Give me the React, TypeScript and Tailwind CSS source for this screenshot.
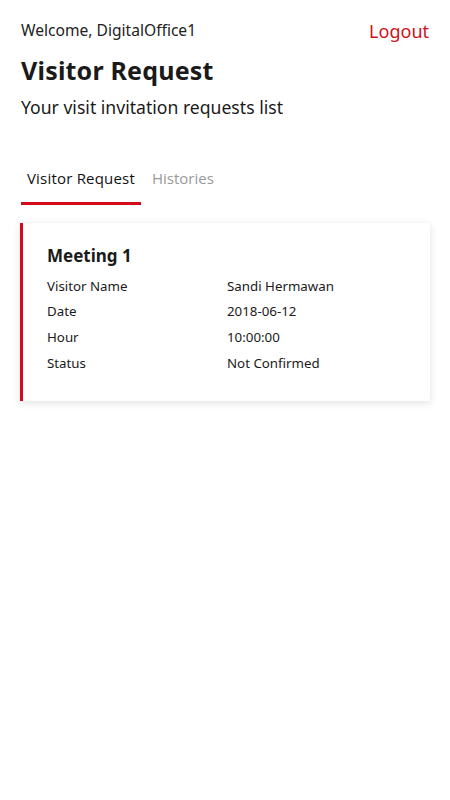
import React from 'react'

const rows = [
  { label: 'Visitor Name', value: 'Sandi Hermawan' },
  { label: 'Date', value: '2018-06-12' },
  { label: 'Hour', value: '10:00:00' },
  { label: 'Status', value: 'Not Confirmed' },
]

const App: React.FC = () => {
  return (
    <div className="min-h-[800px] bg-white px-[21px] pt-[19px] text-[#1a1a1a] font-['Noto_Sans',sans-serif]">
      <div className="flex items-center justify-between h-[24px]">
        <span className="text-[15.6px] text-[#222]">Welcome, DigitalOffice1</span>
        <button className="text-[18px] text-[#d0121b]">Logout</button>
      </div>
      <h1 className="mt-[10px] text-[25px] font-bold leading-[34px] tracking-[0.2px]">Visitor Request</h1>
      <p className="mt-[8px] text-[17.6px] leading-[24px]">Your visit invitation requests list</p>

      <div className="mt-[47px] flex font-['Open_Sans',sans-serif] text-[15px]">
        <div className="w-[120px] flex flex-col items-center">
          <span className="h-[24px] leading-[24px] text-[#111] tracking-[0.2px]">Visitor Request</span>
          <div className="mt-[12px] h-[3px] w-full bg-[#d20a1c]" />
        </div>
        <span className="ml-[11px] h-[24px] leading-[24px] text-[#999]">Histories</span>
      </div>

      <div className="mt-[18px] -ml-px w-[410px] border-l-[3px] border-[#d20a1c] bg-white shadow-[0_2px_8px_rgba(0,0,0,0.12)] pl-[24px] pt-[21px] pb-[25px]">
        <h2 className="text-[17px] font-bold leading-[24px]">Meeting 1</h2>
        <div className="mt-[6px] text-[13.3px]">
          {rows.map((r) => (
            <div key={r.label} className="flex h-[25.6px] items-center">
              <span className="w-[180px]">{r.label}</span>
              <span>{r.value}</span>
            </div>
          ))}
        </div>
      </div>
    </div>
  )
}

export default App
